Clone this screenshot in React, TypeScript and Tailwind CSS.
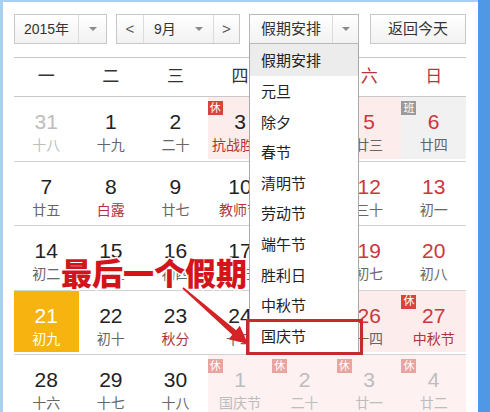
import React from 'react';

type Cell = {
  n: number;
  l: string;
  dim?: boolean;
  wk?: boolean;
  redL?: boolean;
  bg?: 'pink' | 'gray' | 'today';
  tag?: '休' | '班';
};

const rows: Cell[][] = [
  [
    { n: 31, l: '十八', dim: true },
    { n: 1, l: '十九' },
    { n: 2, l: '二十' },
    { n: 3, l: '抗战胜利', redL: true, bg: 'pink', tag: '休' },
    { n: 4, l: '廿二', bg: 'pink', tag: '休' },
    { n: 5, l: '廿三', wk: true, bg: 'pink', tag: '休' },
    { n: 6, l: '廿四', wk: true, bg: 'gray', tag: '班' },
  ],
  [
    { n: 7, l: '廿五' },
    { n: 8, l: '白露', redL: true },
    { n: 9, l: '廿七' },
    { n: 10, l: '教师节', redL: true },
    { n: 11, l: '廿九' },
    { n: 12, l: '三十', wk: true },
    { n: 13, l: '初一', wk: true },
  ],
  [
    { n: 14, l: '初二' },
    { n: 15, l: '初三' },
    { n: 16, l: '初四' },
    { n: 17, l: '初五' },
    { n: 18, l: '初六' },
    { n: 19, l: '初七', wk: true },
    { n: 20, l: '初八', wk: true },
  ],
  [
    { n: 21, l: '初九', bg: 'today' },
    { n: 22, l: '初十' },
    { n: 23, l: '秋分', redL: true },
    { n: 24, l: '十二' },
    { n: 25, l: '十三' },
    { n: 26, l: '十四', wk: true, bg: 'pink', tag: '休' },
    { n: 27, l: '中秋节', wk: true, redL: true, bg: 'pink', tag: '休' },
  ],
  [
    { n: 28, l: '十六' },
    { n: 29, l: '十七' },
    { n: 30, l: '十八' },
    { n: 1, l: '国庆节', dim: true, bg: 'pink', tag: '休' },
    { n: 2, l: '二十', dim: true, bg: 'pink', tag: '休' },
    { n: 3, l: '廿一', dim: true, bg: 'pink', tag: '休' },
    { n: 4, l: '廿二', dim: true, bg: 'pink', tag: '休' },
  ],
];

const holidays = ['假期安排', '元旦', '除夕', '春节', '清明节', '劳动节', '端午节', '胜利日', '中秋节', '国庆节'];
const weekdays = ['一', '二', '三', '四', '五', '六', '日'];

const Caret = () => (
  <span className="block w-0 h-0 border-t-[4px] border-x-[4px] border-x-transparent border-t-[#8a8a8a]" />
);

const DayCell = ({ c }: { c: Cell }) => {
  let bg = '';
  if (c.bg === 'pink') bg = c.dim ? 'bg-[#fdf1f1]' : 'bg-[#fcecec]';
  if (c.bg === 'gray') bg = 'bg-[#f1f1f1]';
  if (c.bg === 'today') bg = 'bg-[#f7b30f]';

  let numColor = 'text-[#222]';
  if (c.wk) numColor = 'text-[#c9383c]';
  if (c.dim) numColor = 'text-[#bdbdbd]';
  if (c.bg === 'today') numColor = 'text-white';

  let lunColor = 'text-[#666]';
  if (c.redL) lunColor = 'text-[#b2343a]';
  if (c.dim) lunColor = 'text-[#bdbdbd]';
  if (c.bg === 'today') lunColor = 'text-white';

  let tagColor = 'bg-[#d9433b]';
  if (c.tag === '班') tagColor = 'bg-[#9a9a9a]';
  if (c.dim) tagColor = 'bg-[#eba3a0]';

  return (
    <div className={`relative flex flex-col items-center pt-[12px] mb-[2px] ${bg}`}>
      {c.tag && (
        <span
          className={`absolute left-0 top-[4px] w-[15px] h-[14px] flex items-center justify-center text-[11px] leading-none text-white ${tagColor}`}
        >
          {c.tag}
        </span>
      )}
      <span className={`text-[21px] leading-[26px] ${numColor}`}>{c.n}</span>
      <span className={`text-[14px] leading-[20px] whitespace-nowrap ${lunColor}`}>{c.l}</span>
    </div>
  );
};

export default function App() {
  return (
    <div className="relative w-[490px] h-[412px] overflow-hidden bg-white flex font-['Liberation_Sans','Noto_Sans_CJK_SC',sans-serif]">
      <div className="w-[3px] shrink-0 bg-[#a9cff3]" />
      <div className="flex-1 flex flex-col border-t-2 border-[#a9cff3] pl-[11px] pr-[12px] pt-[12px]">
        {/* toolbar */}
        <div className="flex shrink-0 h-[30px] text-[14px] text-[#333]">
          <div className="w-[93px] flex border border-[#c8c8c8] bg-gradient-to-b from-white to-[#f2f2f2]">
            <span className="flex-1 flex items-center justify-center">2015年</span>
            <span className="w-[28px] flex items-center justify-center border-l border-[#dcdcdc]">
              <Caret />
            </span>
          </div>
          <div className="ml-[9px] w-[124px] flex border border-[#c8c8c8] bg-gradient-to-b from-white to-[#f2f2f2]">
            <span className="w-[27px] flex items-center justify-center border-r border-[#dcdcdc] text-[#555] text-[15px]">&lt;</span>
            <span className="flex-1 flex items-center justify-between pl-[10px] pr-[10px]">
              <span>9月</span>
              <Caret />
            </span>
            <span className="w-[26px] flex items-center justify-center border-l border-[#dcdcdc] text-[#555] text-[15px]">&gt;</span>
          </div>
          <div className="ml-[9px] w-[110px] flex border border-[#b8b8b8] bg-gradient-to-b from-white to-[#f2f2f2]">
            <span className="flex-1 flex items-center pl-[11px] text-[15px]">假期安排</span>
            <span className="w-[26px] flex items-center justify-center border-l border-[#dcdcdc]">
              <Caret />
            </span>
          </div>
          <div className="ml-[11px] w-[96px] flex items-center justify-center border border-[#c8c8c8] bg-gradient-to-b from-white to-[#f2f2f2] text-[15px]">
            返回今天
          </div>
        </div>

        {/* weekdays */}
        <div className="mt-[13px] shrink-0 grid grid-cols-7 h-[40px] border-y border-[#c9c9c9] items-center text-[17px]">
          {weekdays.map((w, i) => (
            <span key={w} className={`text-center ${i >= 5 ? 'text-[#b8353a]' : 'text-[#333]'}`}>
              {w}
            </span>
          ))}
        </div>

        {/* days */}
        {rows.map((r, i) => (
          <div key={i} className="grid shrink-0 grid-cols-7 h-[64.5px] border-b border-[#d2d2d2]">
            {r.map((c, j) => (
              <DayCell key={j} c={c} />
            ))}
          </div>
        ))}
      </div>
      <div className="w-[12px] shrink-0 bg-[#4f98e6]" />

      {/* annotation text */}
      <div className="absolute left-[61px] top-[253px] text-[31px] leading-[38px] font-black text-[#d3141c] [paint-order:stroke_fill] [-webkit-text-stroke:3px_white] font-['Noto_Sans_CJK_SC',sans-serif]">
        最后一个假期
      </div>

      {/* arrow */}
      <svg className="absolute left-0 top-0" width="490" height="412" viewBox="0 0 490 412">
        <polygon
          points="183.6,287.2 236.1,330.2 239.8,325.8 248,344 228.6,339.2 232.3,334.8 182.4,288.8"
          fill="#d42326"
        />
      </svg>

      {/* dropdown */}
      <div className="absolute left-[249px] top-[44px] w-[110px] h-[309px] bg-white border-x border-b border-[#a8a8a8] text-[15px] text-[#222] font-['Noto_Sans_CJK_SC',sans-serif]">
        {holidays.map((h, i) => (
          <div
            key={h}
            className={`flex items-center pl-[11px] ${i === 0 ? 'h-[32px] bg-[#ececec]' : 'h-[30.6px]'}`}
          >
            {h}
          </div>
        ))}
      </div>

      {/* highlight box */}
      <div className="absolute left-[246px] top-[319px] w-[117px] h-[36px] border-[3px] border-[#c62a2d]" />
    </div>
  );
}
